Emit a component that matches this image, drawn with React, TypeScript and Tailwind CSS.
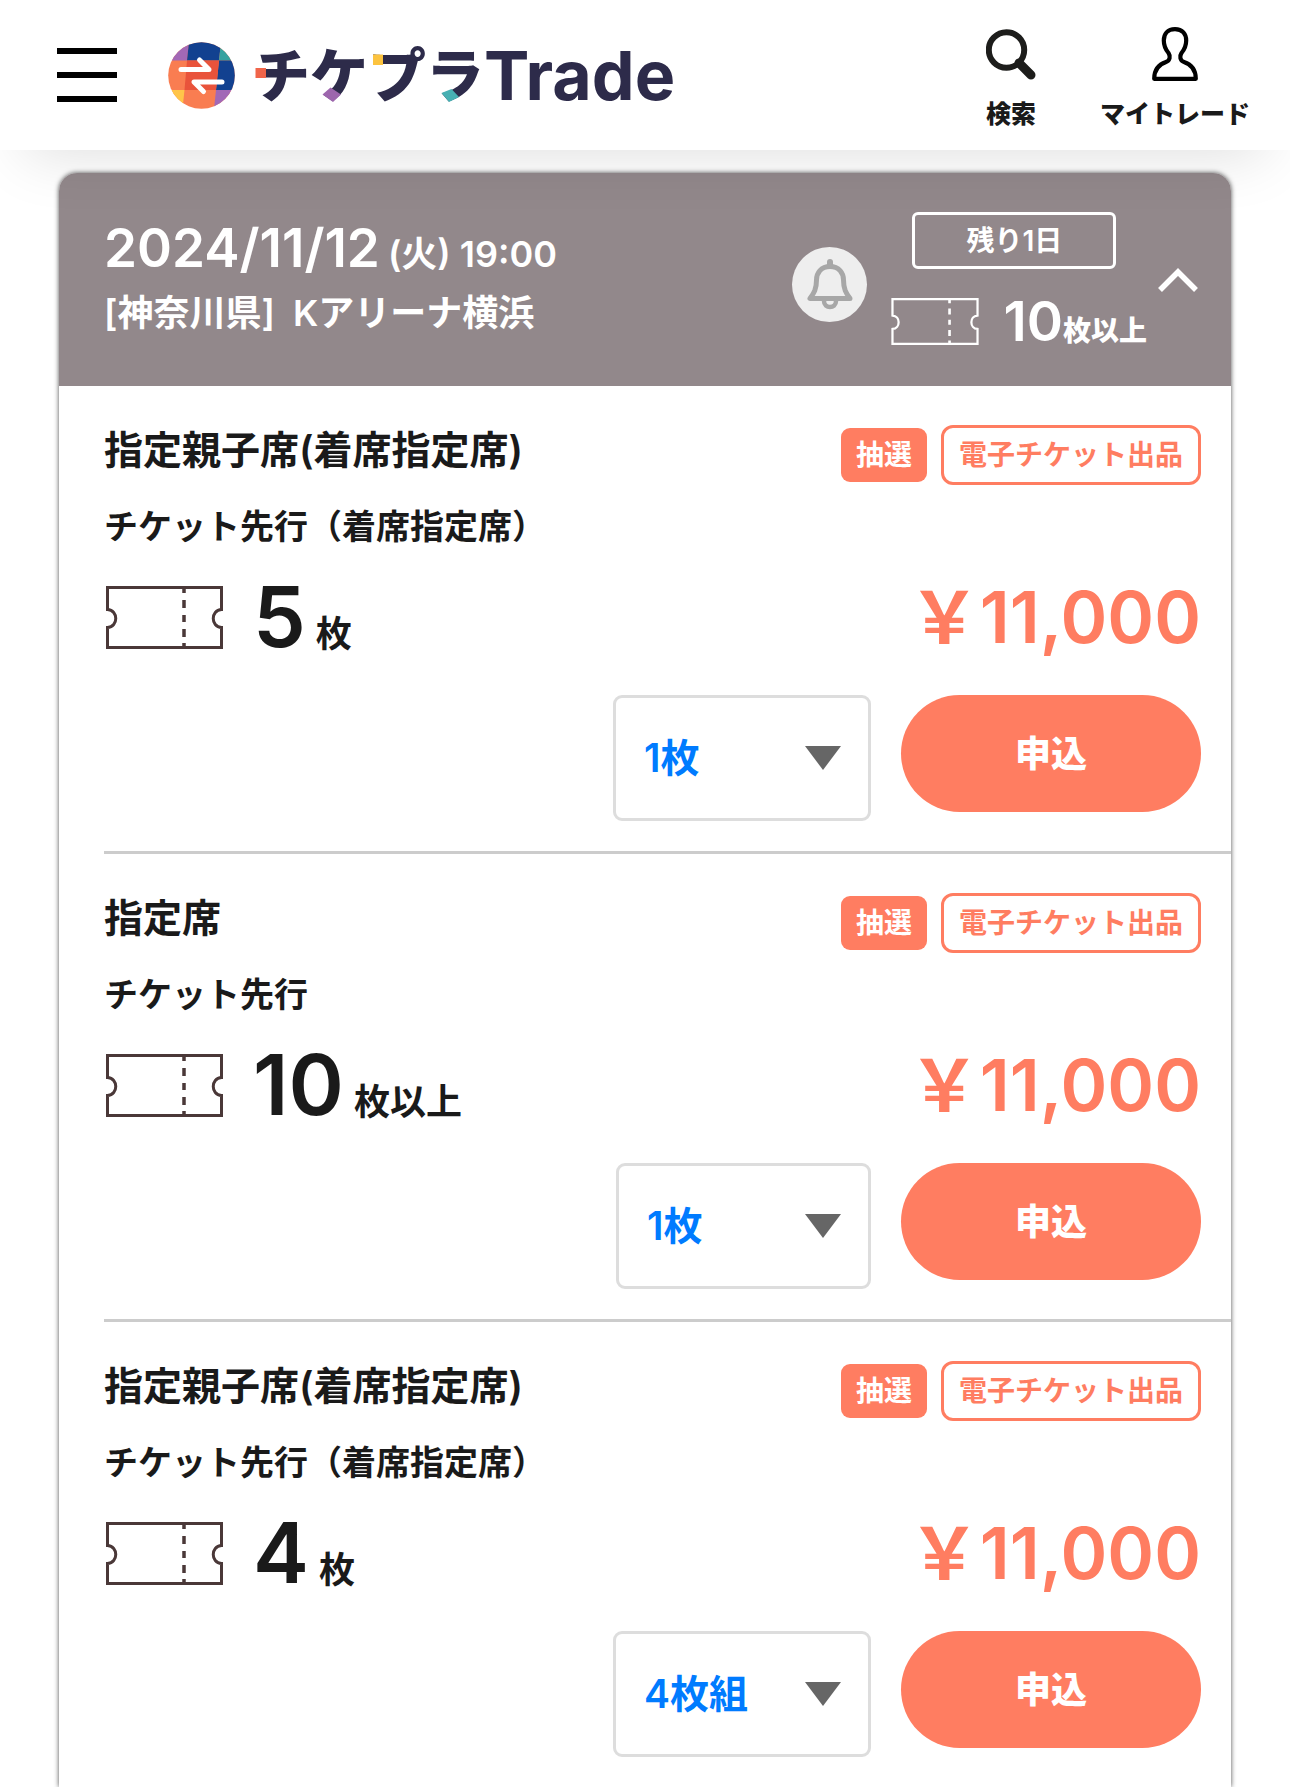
import React from "react";

type Ticket = {
  id: string;
  title: string;
  subtitle: string;
  count: string;
  unit: string;
  option: string;
  selectWidth: string;
};

const tickets: Ticket[] = [
  {
    id: "t1",
    title: "指定親子席(着席指定席)",
    subtitle: "チケット先行（着席指定席）",
    count: "5",
    unit: "枚",
    option: "1枚",
    selectWidth: "w-[258px]",
  },
  {
    id: "t2",
    title: "指定席",
    subtitle: "チケット先行",
    count: "10",
    unit: "枚以上",
    option: "1枚",
    selectWidth: "w-[255px]",
  },
  {
    id: "t3",
    title: "指定親子席(着席指定席)",
    subtitle: "チケット先行（着席指定席）",
    count: "4",
    unit: "枚",
    option: "4枚組",
    selectWidth: "w-[258px]",
  },
];

function LogoMark() {
  return (
    <svg viewBox="0 0 67 67" className="size-[67px] shrink-0" aria-hidden="true">
      <defs>
        <clipPath id="mark">
          <circle cx="33.5" cy="33.5" r="33.3" />
        </clipPath>
      </defs>
      <g clipPath="url(#mark)">
        <rect width="67" height="67" fill="#f97d51" />
        <path d="M0 0H21L19 18.500H0Z" fill="#a268b6" />
        <path d="M21 0H53L51 18.500H19Z" fill="#124190" />
        <path d="M53 0H67V18.500H51Z" fill="#35a3a0" />
        <path d="M51 18.500H67V48H48Z" fill="#124190" />
        <path d="M19 18.500H51L48 48H16.500Z" fill="#e9533b" />
        <path d="M0 48H16.500L14.500 67H0Z" fill="#ffc549" />
        <path d="M48 48H67V67H46Z" fill="#a268b6" />
      </g>
      <g fill="none" stroke="#fff" strokeWidth="5" strokeLinecap="round" strokeLinejoin="round">
        <path d="M13 27.500H41L31.500 18" />
        <path d="M54 40H26L35.500 49.500" />
      </g>
    </svg>
  );
}

function SearchIcon() {
  return (
    <svg viewBox="0 0 50 54" className="h-[54px] w-[50px]" fill="none" aria-hidden="true">
      <circle cx="20.500" cy="23" r="17.700" stroke="#1d1d1b" strokeWidth="6" />
      <path d="M33 36L45 48" stroke="#1d1d1b" strokeWidth="9" strokeLinecap="round" />
    </svg>
  );
}

function UserIcon() {
  return (
    <svg viewBox="0 0 46 54" className="h-[54px] w-[46px]" fill="none" aria-hidden="true">
      <path
        d="M23 2.200C15.500 2.200 11.800 7 11.800 13.500C11.800 20 14 23 16.500 26C18.500 29 18.200 33.500 14 35C6.500 37.500 2.200 43 2.200 51.800H43.800C43.800 43 39.500 37.500 32 35C27.800 33.500 27.500 29 29.500 26C32 23 34.200 20 34.200 13.500C34.200 7 30.500 2.200 23 2.200Z"
        stroke="#000"
        strokeWidth="4.200"
        strokeLinejoin="round"
      />
    </svg>
  );
}

function BellIcon() {
  return (
    <svg viewBox="0 0 75 75" className="size-[75px]" fill="none" aria-hidden="true">
      <path d="M38 15V19" stroke="#a7a7a7" strokeWidth="6" strokeLinecap="round" />
      <path
        d="M38 19.500C29 19.500 24.500 26 24.500 33C24.500 42 22 46 18 51.500H58C54 46 51.500 42 51.500 33C51.500 26 47 19.500 38 19.500Z"
        stroke="#a7a7a7"
        strokeWidth="5"
        strokeLinejoin="round"
      />
      <path d="M32 54C32 62 44 62 44 54" stroke="#a7a7a7" strokeWidth="4.500" />
    </svg>
  );
}

function TicketIcon({ className }: { className: string }) {
  return (
    <svg viewBox="0 0 117 63" className={className} fill="none" stroke="currentColor" aria-hidden="true">
      <path
        d="M1.500 1.500H115.500V23.500C104.500 24 104.500 41 115.500 41.500V61.500H1.500V41.500C12.500 41 12.500 24 1.500 23.500Z"
        strokeWidth="3"
      />
      <path d="M78 1V7M78 14V22M78 29V36M78 43V51M78 57V62" strokeWidth="3.500" />
    </svg>
  );
}

function TicketRow({ ticket, last }: { ticket: Ticket; last: boolean }) {
  return (
    <li className={last ? "pt-[39px] pr-[30px] pb-[30px]" : "border-b-3 border-[#ccc] pt-[39px] pr-[30px] pb-[30px]"}>
      <div className="flex h-[60px] items-start justify-between">
        <h3 className="text-[39px] leading-[50px] font-semibold">{ticket.title}</h3>
        <div className="flex items-center gap-[14px] text-[28px] font-semibold">
          <span className="flex h-[54px] items-center rounded-[9px] bg-[#ff7d61] px-[15px] text-white">抽選</span>
          <span className="flex h-[60px] items-center rounded-[12px] border-3 border-[#ff7d61] px-[15px] text-[#ff7d61]">
            電子チケット出品
          </span>
        </div>
      </div>
      <p className="mt-[17px] text-[34px] leading-[50px] font-semibold">{ticket.subtitle}</p>
      <div className="mt-[23px] flex h-[84px] items-center justify-between">
        <div className="flex items-center">
          <TicketIcon className="ml-[2px] h-[63px] w-[117px] text-[#4a3838]" />
          <p className="ml-[30px] flex items-baseline gap-[10px]">
            <span className="text-[84px] leading-[84px] font-semibold">{ticket.count}</span>
            <span className="text-[36px] leading-none font-semibold">{ticket.unit}</span>
          </p>
        </div>
        <p className="text-[71px] leading-[80px] font-semibold text-[#ff7d61]">￥11,000</p>
      </div>
      <div className="mt-9 flex items-start justify-end gap-[30px]">
        <div className="relative">
          <select
            aria-label="枚数"
            className={`${ticket.selectWidth} h-[126px] appearance-none rounded-[9px] border-3 border-[#ddd] bg-white pl-[28px] text-[39px] font-semibold text-[#007bff]`}
          >
            <option>{ticket.option}</option>
          </select>
          <svg
            viewBox="0 0 36 24"
            className="pointer-events-none absolute top-[51px] right-[30px] h-6 w-9"
            aria-hidden="true"
          >
            <path d="M0 0H36L18 24Z" fill="#666" />
          </svg>
        </div>
        <button className="h-[117px] w-[300px] rounded-full bg-[#ff7d61] text-[36px] font-black text-white">申込</button>
      </div>
    </li>
  );
}

export default function App() {
  return (
    <div className="bg-white font-['Inter','Noto_Sans_CJK_JP',sans-serif] text-[#1a1a1a]" lang="ja">
      <header className="relative z-10 flex h-[150px] items-center justify-between bg-white pr-10 pl-[57px] shadow-[0_30px_60px_-25px_rgba(0,0,0,0.13)]">
        <div className="flex items-center">
          <button aria-label="メニュー" className="flex w-[60px] flex-col gap-[18px]">
            <span className="h-[6px] bg-black" />
            <span className="h-[6px] bg-black" />
            <span className="h-[6px] bg-black" />
          </button>
          <a href="#" className="ml-[51px] flex items-center">
            <LogoMark />
            <span className="relative ml-[17px] flex items-center leading-[80px] text-[#2d2b4a]">
              <span className="pb-[7px] font-['Noto_Sans_CJK_JP',sans-serif] text-[58px] font-black">チケプラ</span>
              <span className="text-[68px] font-bold">Trade</span>
              <svg viewBox="0 0 232 80" className="absolute top-0 left-0 h-20 w-[232px]" aria-hidden="true">
                <path d="M3.500 36H14V46H3.500Z" fill="#f0654a" />
                <path d="M70.500 62.500L78.500 55.500L89 62.500L81 70Z" fill="#9d66ad" />
                <path d="M121 22.500H131V33H121Z" fill="#fcc33f" />
                <path d="M189.500 61L199.500 57L207 65L197 70Z" fill="#47b0b3" />
              </svg>
            </span>
          </a>
        </div>
        <nav className="flex items-end gap-[64px] pt-[6px] text-[25px] leading-[30px] font-black">
          <a href="#" className="flex flex-col items-center gap-[18px]">
            <SearchIcon />
            検索
          </a>
          <a href="#" className="flex flex-col items-center gap-[18px]">
            <UserIcon />
            マイトレード
          </a>
        </nav>
      </header>

      <main className="px-[59px] pt-[23px]">
        <section className="rounded-t-[18px] bg-white shadow-[0_0_5px_rgba(0,0,0,0.7)]">
          <div className="flex h-[213px] items-center justify-between rounded-t-[18px] bg-[#92888b] pr-[33px] pl-[45px] text-white">
            <div className="pb-[6px]">
              <h2 className="flex items-baseline gap-[8px] font-semibold">
                <span className="text-[53px] leading-[72px]">2024/11/12</span>
                <span className="text-[36px] leading-none">(火) 19:00</span>
              </h2>
              <p className="text-[36px] leading-[58px] font-semibold">[神奈川県]&nbsp; Kアリーナ横浜</p>
            </div>
            <div className="flex items-center">
              <button aria-label="通知" className="mt-[10px] size-[75px] rounded-full bg-[#eee]">
                <BellIcon />
              </button>
              <div className="mt-1 ml-[24px] flex flex-col">
                <span className="ml-[21px] flex h-[57px] w-[204px] items-center justify-center rounded-[6px] border-3 border-white text-[28px] font-semibold">
                  残り1日
                </span>
                <div className="mt-[22px] flex items-center">
                  <TicketIcon className="h-[47px] w-[88px]" />
                  <p className="ml-[24px] flex items-baseline">
                    <span className="text-[55px] leading-[60px] font-semibold">10</span>
                    <span className="text-[28px] leading-none font-black">枚以上</span>
                  </p>
                </div>
              </div>
              <button aria-label="閉じる" className="ml-[11px]">
                <svg viewBox="0 0 40 24" className="h-6 w-10" fill="none" aria-hidden="true">
                  <path d="M2 22L20 4L38 22" stroke="#fff" strokeWidth="5.500" />
                </svg>
              </button>
            </div>
          </div>
          <ul className="pl-[45px]">
            {tickets.map((t, i) => (
              <TicketRow key={t.id} ticket={t} last={i === tickets.length - 1} />
            ))}
          </ul>
        </section>
      </main>
    </div>
  );
}
